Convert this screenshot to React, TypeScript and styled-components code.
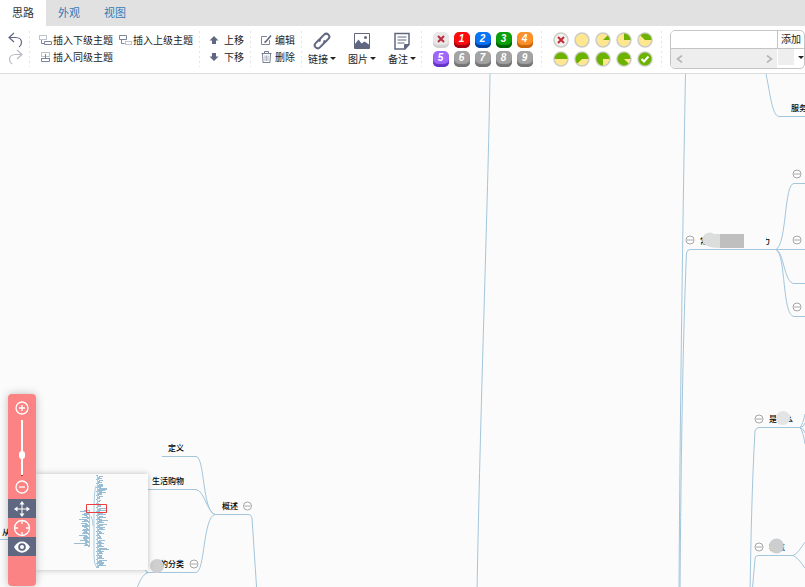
import React from 'react';
import styled, { createGlobalStyle, css } from 'styled-components';

const LINE = '#a3c6dc';
const ICON = '#5f6880';

const GlobalStyle = createGlobalStyle`
  * { box-sizing: border-box; }
  body {
    margin: 0;
    background: #fbfbfb;
    color: #222;
    font-family: "Noto Sans CJK SC", "Liberation Sans", sans-serif;
    font-size: 10px;
  }
  button {
    margin: 0;
    padding: 0;
    border: 0;
    background: none;
    color: inherit;
    font: inherit;
    cursor: pointer;
  }
  svg { display: block; flex: none; }
`;

const divider = css`
  background: repeating-linear-gradient(to bottom, #e4e4e4 0 2px, transparent 2px 5px)
    right 6px / 1px 36px no-repeat;
`;

const Page = styled.div`
  display: flex;
  flex-direction: column;
  height: 100vh;
  overflow: hidden;
`;

const Tabs = styled.nav`
  display: flex;
  flex: none;
  height: 26px;
  background: #e1e1e1;
`;

const Tab = styled.button<{ $active?: boolean }>`
  width: 46px;
  font-size: 11px;
  line-height: 24px;
  padding-bottom: 2px;
  color: ${(p) => (p.$active ? '#333' : '#337ab7')};
  background: ${(p) => (p.$active ? '#fff' : 'transparent')};
`;

const Toolbar = styled.div`
  display: flex;
  flex: none;
  height: 48px;
  background: #fff;
  border-bottom: 1px solid #dbdbdb;
`;

const Group = styled.div<{ $pad?: number; $end?: number }>`
  display: flex;
  flex: none;
  flex-direction: column;
  padding: 6px ${(p) => p.$end ?? 7}px 0 ${(p) => p.$pad ?? 9}px;
  ${divider}
  background-position: right 0 top 5px;
`;

const Row = styled.div`
  display: flex;
  gap: 6px;
  height: 17px;
`;

const ToolButton = styled.button<{ $gap?: number; $off?: boolean }>`
  display: flex;
  align-items: center;
  gap: ${(p) => p.$gap ?? 0}px;
  height: 17px;
  line-height: 16px;
  padding-bottom: 1px;
  white-space: nowrap;
  opacity: ${(p) => (p.$off ? 0.45 : 1)};
`;

const BigGroup = styled.div`
  display: flex;
  flex: none;
  ${divider}
  background-position: right 0 top 5px;
`;

const BigButton = styled.button`
  display: flex;
  flex-direction: column;
  align-items: center;
  width: 40px;
  padding-top: 6px;
`;

const BigLabel = styled.span`
  display: flex;
  align-items: center;
  gap: 2px;
  height: 17px;
  line-height: 17px;
`;

const Caret = styled.i`
  border: 3px solid transparent;
  border-top-color: #222;
  border-bottom: 0;
`;

const BadgeGrid = styled.div`
  display: grid;
  flex: none;
  grid-template-columns: repeat(5, 16px);
  grid-auto-rows: 16px;
  gap: 3px 5px;
  padding: 6px 9px 0 11px;
  ${divider}
  background-position: right 0 top 5px;
`;

const Badge = styled.button<{ $top: string; $edge: string }>`
  display: flex;
  align-items: center;
  justify-content: center;
  width: 16px;
  height: 16px;
  padding: 0 1px 2px 0;
  border-radius: 5px;
  background: ${(p) => p.$top};
  box-shadow: inset 0 -3px 1px ${(p) => p.$edge};
  color: #fff;
  font: italic bold 10px/14px "Liberation Sans", sans-serif;
`;

const PlainButton = styled.button`
  display: flex;
  align-items: center;
  justify-content: center;
`;

const Resource = styled.div`
  display: grid;
  flex: 1;
  grid-template-columns: 1fr 26px;
  grid-template-rows: 18px 18px;
  height: 39px;
  margin: 4px 0 0 8px;
  border: 1px solid #c4c4c4;
  border-radius: 5px;
  overflow: hidden;
`;

const ResourceInput = styled.input`
  min-width: 0;
  width: 100%;
  border: 0;
  border-right: 1px solid #c4c4c4;
  border-bottom: 1px solid #c4c4c4;
  padding: 0 4px;
  font: inherit;
  outline: 0;
`;

const AddButton = styled.button`
  padding-bottom: 1px;
  border-bottom: 1px solid #c4c4c4;
  line-height: 14px;
  white-space: nowrap;
`;

const ResourceList = styled.div`
  display: flex;
  align-items: center;
  justify-content: space-between;
  height: 19px;
  padding: 0 4px 0 5px;
  border-right: 1px solid #fff;
  background: #eee;
`;

const ResourceMore = styled.button`
  display: flex;
  align-items: center;
  justify-content: flex-end;
  height: 16px;
  background: linear-gradient(to right, #eee 16px, #fff 16px);
`;

const Canvas = styled.main`
  position: relative;
  flex: 1;
  min-height: 0;
  overflow: hidden;
  background: #fbfbfb;
`;

const Drawing = styled.svg`
  position: absolute;
  inset: 0;
  width: 100%;
  height: 100%;
`;

const NodeLabel = styled.span<{ $x: number; $y: number }>`
  position: absolute;
  left: ${(p) => p.$x}px;
  top: ${(p) => p.$y}px;
  color: #000;
  font-size: 8px;
  font-weight: 500;
  line-height: 12px;
  white-space: nowrap;
`;

const Navigator = styled.aside`
  position: absolute;
  left: 8px;
  bottom: 1px;
  display: flex;
  flex-direction: column;
  align-items: center;
  width: 28px;
  height: 192px;
  padding-top: 4px;
  border-radius: 4px;
  background: #fc8383;
  box-shadow: 0 0 8px rgba(0, 0, 0, 0.25);
`;

const NavButton = styled.button<{ $dark?: boolean }>`
  display: flex;
  flex: none;
  align-items: center;
  justify-content: center;
  width: 28px;
  height: 19px;
  background: ${(p) => (p.$dark ? '#5f6880' : 'transparent')};
`;

const ZoomSlider = styled.input`
  appearance: none;
  flex: none;
  writing-mode: vertical-lr;
  direction: rtl;
  width: 8px;
  height: 56px;
  margin: 3px 0 1px;
  background: transparent;
  &::-webkit-slider-runnable-track {
    width: 2px;
    height: 56px;
    background: linear-gradient(to top, #e02020 1px, #fff 1px);
  }
  &::-webkit-slider-thumb {
    appearance: none;
    width: 6px;
    height: 8px;
    margin-right: -2px;
    margin-left: -2px;
    border-radius: 3px;
    background: #fff;
  }
`;

const NavTools = styled.div`
  display: flex;
  flex-direction: column;
  margin-top: 3px;
`;

const MiniMap = styled.div`
  position: absolute;
  left: 36px;
  bottom: 17px;
  width: 112px;
  height: 96px;
  background: #fbfbfb;
  box-shadow: 0 0 6px rgba(0, 0, 0, 0.25);
`;

const InsertIcon = ({ kind }: { kind: 'child' | 'parent' | 'sibling' }) => (
  <svg width="14" height="12" viewBox="0 0 14 12" fill="none" stroke="#7d8498">
    {kind === 'child' && (
      <>
        <path d="M.5 1.500h7v4h-7z" strokeDasharray="1 1" />
        <path d="M2.500 6v3.500h3M5.500 7.500h7v3h-7z" />
      </>
    )}
    {kind === 'parent' && (
      <>
        <path d="M.5 1.500h7v4h-7zM2.500 5.500v4h3" />
        <path d="M6.500 7.500h6v3h-6z" strokeDasharray="1 1" />
      </>
    )}
    {kind === 'sibling' && (
      <>
        <path d="M2.500 1.500h8v4h-8z" strokeDasharray="1 1" />
        <path d="M6.500 3v4.500M2 7.500h9M2.500 7.500v3h8v-3" />
      </>
    )}
  </svg>
);

const HistoryIcon = ({ flip }: { flip?: boolean }) => (
  <svg width="15" height="16" viewBox="0 0 15 16" fill="none" stroke={ICON} strokeWidth="1.200">
    <path
      transform={flip ? 'translate(15 0) scale(-1 1)' : undefined}
      d="M6 1L1 5.500l5 4.500M1 5.500h6.500c4 0 6 2.500 6 5 0 2-1 3.500-2.500 4.500"
    />
  </svg>
);

const ArrowIcon = ({ down }: { down?: boolean }) => (
  <svg width="10" height="10" viewBox="0 0 10 10" fill={ICON}>
    <path transform={down ? 'rotate(180 5 5)' : undefined} d="M5 1l4.500 4.500H7V9H3V5.500H.5z" />
  </svg>
);

const EditIcon = () => (
  <svg width="11" height="12" viewBox="0 0 11 12" fill="none" stroke={ICON}>
    <path d="M6 2.500H.5v8h8V6" opacity=".8" />
    <path d="M10 1.500L5 7.500l-1.500 1" strokeWidth="1.600" />
  </svg>
);

const TrashIcon = () => (
  <svg width="11" height="12" viewBox="0 0 11 12" fill="none" stroke={ICON}>
    <path d="M.5 2.500h10M3.500 2V.5h4V2M1.500 2.500l.5 9h7l.5-9" opacity=".85" />
    <path d="M4 4.500V10M5.500 4.500V10M7 4.500V10" opacity=".5" />
  </svg>
);

const LinkIcon = () => (
  <svg width="18" height="18" viewBox="0 0 18 18" fill="none" stroke={ICON} strokeWidth="2">
    <g transform="rotate(-45 9 9)">
      <path d="M8.500 6H3a3 3 0 0 0 0 6H8a3 3 0 0 0 2.800-2" />
      <path d="M9.500 12H15a3 3 0 0 0 0-6H10a3 3 0 0 0-2.800 2" />
    </g>
  </svg>
);

const ImageIcon = () => (
  <svg width="18" height="18" viewBox="0 0 18 18">
    <path d="M1.500 1.500h15v15h-15z" fill="#fff" stroke={ICON} />
    <path d="M2 12l3.500-4.500 3 4 3-2 4.500 3V17H2z" fill={ICON} />
    <circle cx="12.500" cy="5.500" r="1.500" fill={ICON} />
  </svg>
);

const NoteIcon = () => (
  <svg width="18" height="18" viewBox="0 0 18 18" fill="none" stroke={ICON}>
    <path d="M2 1.500h14v11L12 17H2z" strokeWidth="1.500" />
    <path d="M4.500 5h9M4.500 8h9M4.500 11h7" />
    <path d="M11.500 17v-4.500H16z" fill={ICON} />
  </svg>
);

const Cross = () => (
  <svg width="8" height="8" viewBox="0 0 8 8" stroke="#bb2d3d" strokeWidth="2">
    <path d="M1 1l6 6M7 1L1 7" />
  </svg>
);

const ProgressIcon = ({ step }: { step: number }) => {
  const start = -(step / 8) * 2 * Math.PI;
  const x = 8 + 6.5 * Math.cos(start);
  const y = 8 + 6.5 * Math.sin(start);
  return (
    <svg width="16" height="16" viewBox="0 0 16 16">
      <circle cx="8" cy="8" r="7" fill={step < 0 ? '#f2f2f2' : '#ffe78f'} stroke="#cbcbc6" strokeWidth="1.500" />
      {step > 0 && step < 8 && (
        <path d={`M8 8L${x} ${y}A6.500 6.500 0 ${step > 4 ? 1 : 0} 1 14.500 8z`} fill="#6bb300" />
      )}
      {step === 8 && (
        <>
          <circle cx="8" cy="8" r="6.500" fill="#6bb300" />
          <path d="M4.500 8l2.500 2.500 4.500-5" fill="none" stroke="#fff" strokeWidth="2" />
        </>
      )}
      {step < 0 && <path d="M5 5l6 6M11 5l-6 6" stroke="#c62a35" strokeWidth="2" />}
    </svg>
  );
};

const Chevron = ({ right }: { right?: boolean }) => (
  <svg width="7" height="8" viewBox="0 0 7 8" fill="none" stroke="#b5b5b5" strokeWidth="1.600">
    <path d={right ? 'M1 .5L5.500 4 1 7.500' : 'M6 .5L1.500 4 6 7.500'} />
  </svg>
);

const ZoomIcon = ({ plus }: { plus?: boolean }) => (
  <svg width="14" height="14" viewBox="0 0 14 14" fill="none" stroke="#fff">
    <circle cx="7" cy="7" r="6" strokeWidth="1.300" />
    <path d={plus ? 'M4 7h6M7 4v6' : 'M4 7h6'} strokeWidth="1.300" />
  </svg>
);

const MoveIcon = () => (
  <svg width="16" height="16" viewBox="0 0 16 16" fill="#fff">
    <path d="M7.500 3h1v4.500H13v1H8.500V13h-1V8.500H3v-1h4.500zM8 0l2.500 3.500h-5zM8 16l-2.500-3.500h5zM0 8l3.500-2.500v5zM16 8l-3.500 2.500v-5z" />
  </svg>
);

const FocusIcon = () => (
  <svg width="18" height="18" viewBox="0 0 18 18" fill="none" stroke="#fff">
    <circle cx="9" cy="9" r="7.500" strokeWidth="1.300" />
    <path d="M9 1v4M9 13v4M1 9h4M13 9h4" strokeWidth="1.300" />
  </svg>
);

const EyeIcon = () => (
  <svg width="16" height="12" viewBox="0 0 16 12">
    <path d="M0 6c4-7.500 12-7.500 16 0-4 7.500-12 7.500-16 0z" fill="#fff" />
    <circle cx="8" cy="6" r="3.800" fill="#5f6880" />
    <circle cx="8" cy="6" r="2" fill="#fff" />
  </svg>
);

const priorities = [
  { n: 1, top: '#fb0d0d', edge: '#a30016' },
  { n: 2, top: '#0a74f5', edge: '#003f9c' },
  { n: 3, top: '#0ba00b', edge: '#006300' },
  { n: 4, top: '#fb912b', edge: '#c9640c' },
  { n: 5, top: '#a066fb', edge: '#6233c4' },
  { n: 6, top: '#a3a3a3', edge: '#747474' },
  { n: 7, top: '#a3a3a3', edge: '#747474' },
  { n: 8, top: '#a3a3a3', edge: '#747474' },
  { n: 9, top: '#a3a3a3', edge: '#747474' },
];

const branches = [
  'M490 0C488 130 480 340 477 520',
  'M685.500 0C683 130 680 340 679 520',
  'M776 175.500H690Q687 175.500 686.500 179C683 260 681 380 680 520',
  'M766 0C770 18 772 42 779 42.500H805',
  'M776 175.500C787 170 784 109 794 109.500H805',
  'M776 175.500H805',
  'M776 175.500C784 178 784 209 794 209.500H805',
  'M776 175.500C786 180 782 242 794 242.500H805',
  'M800 353.500H759Q756 353.500 755 357C752 410 751 460 750 520',
  'M800 353.500Q803 350 805 340M800 353.500Q804 353 805 349M800 353.500Q804 355 805 359M800 353.500Q803 357 805 370',
  'M793 481.500H758Q755 481.500 755 485L752 520',
  'M793 481.500C799 479 802 471 807 466M793 481.500C799 484 802 491 807 496',
  'M162 382.500H196C205 383 202 437 215 440.500',
  'M148 415.500H196C204 416 207 438 215 440.500',
  'M215 440.500H249Q251 440.500 252 444L257 520',
  'M215 440.500C203 443 205 498 196 498.500H146',
  'M148 498.500C142 501 140 507 137 514M148 498.500L140 492',
  'M0 465.500H10',
];

const toggles = [
  [690, 166], [797, 100], [797, 166], [797, 233], [759, 345], [759, 473], [247.5, 432], [194, 490],
];

const rightTwigs = [
  2, 4, 2, 5, 3, 4, 2, 5, 3, 4, 5, 6, 5, 8, 9, 8, 6, 7, 4, 5, 3, 4, 2, 3, 1, 2, 2, 1, 3, 2, 3, 4,
  2, 7, 3, 9, 4, 8, 5, 9, 3, 4, 8, 3, 6, 9, 4, 7, 3, 8, 5, 3, 9, 4, 7, 2, 5, 3, 6, 2, 4, 2, 3, 5,
  2, 6, 3, 5, 8, 2, 4, 7, 3, 8, 11, 4, 8, 3, 5, 2, 6, 3, 4, 7, 2, 8, 4, 7, 8, 4, 8, 2, 3,
];
const leftTwigs = [
  6, 7, 2, 5, 8, 3, 2, 7, 3, 8, 4, 7, 2, 6, 3, 7, 8, 3, 2, 6, 8, 3, 5, 7, 2, 8, 4, 6, 7, 3, 8, 4, 5, 13, 3, 5, 2,
];

const MiniTree = () => (
  <svg width="112" height="96" viewBox="0 0 112 96" fill="none">
    <path
      stroke="#8db5cf"
      strokeWidth=".9"
      d={
        rightTwigs.map((n, i) => `M${60 + ((i * 3) % 4)} ${1.5 + i}h${n}`).join('') +
        leftTwigs.map((n, i) => `M${54 - ((i * 3) % 4)} ${36.5 + i}h${-n}`).join('')
      }
    />
    <path stroke="#aecbdc" d="M61.500 2v91M60 12Q58 16 58 40V82Q58 90 61 94M53.500 37v36M55 42Q57 46 57 52" />
    <path stroke="#ee3b41" d="M50.500 30.500h20v8h-20z" />
  </svg>
);

export default function App() {
  return (
    <Page>
      <GlobalStyle />
      <Tabs>
        <Tab $active>思路</Tab>
        <Tab>外观</Tab>
        <Tab>视图</Tab>
      </Tabs>
      <Toolbar>
        <Group $pad={8}>
          <Row><ToolButton aria-label="撤销"><HistoryIcon /></ToolButton></Row>
          <Row><ToolButton aria-label="重做" $off><HistoryIcon flip /></ToolButton></Row>
        </Group>
        <Group>
          <Row>
            <ToolButton><InsertIcon kind="child" />插入下级主题</ToolButton>
            <ToolButton><InsertIcon kind="parent" />插入上级主题</ToolButton>
          </Row>
          <Row>
            <ToolButton><InsertIcon kind="sibling" />插入同级主题</ToolButton>
          </Row>
        </Group>
        <Group>
          <Row><ToolButton $gap={5}><ArrowIcon />上移</ToolButton></Row>
          <Row><ToolButton $gap={5}><ArrowIcon down />下移</ToolButton></Row>
        </Group>
        <Group $pad={10}>
          <Row><ToolButton $gap={3}><EditIcon />编辑</ToolButton></Row>
          <Row><ToolButton $gap={3}><TrashIcon />删除</ToolButton></Row>
        </Group>
        <BigGroup>
          <BigButton><LinkIcon /><BigLabel>链接<Caret /></BigLabel></BigButton>
          <BigButton><ImageIcon /><BigLabel>图片<Caret /></BigLabel></BigButton>
          <BigButton><NoteIcon /><BigLabel>备注<Caret /></BigLabel></BigButton>
        </BigGroup>
        <BadgeGrid>
          <Badge $top="#e9e9e9" $edge="#d2d2d2" aria-label="移除优先级"><Cross /></Badge>
          {priorities.map((p) => (
            <Badge key={p.n} $top={p.top} $edge={p.edge}>{p.n}</Badge>
          ))}
        </BadgeGrid>
        <BadgeGrid>
          {[-1, 0, 1, 2, 3, 4, 5, 6, 7, 8].map((step) => (
            <PlainButton key={step} aria-label={step < 0 ? '移除进度' : `进度 ${step}/8`}>
              <ProgressIcon step={step} />
            </PlainButton>
          ))}
        </BadgeGrid>
        <Resource>
          <ResourceInput aria-label="资源" />
          <AddButton>添加</AddButton>
          <ResourceList>
            <PlainButton aria-label="向左"><Chevron /></PlainButton>
            <PlainButton aria-label="向右"><Chevron right /></PlainButton>
          </ResourceList>
          <ResourceMore aria-label="更多"><Caret /></ResourceMore>
        </Resource>
      </Toolbar>
      <Canvas>
        <Drawing fill="none">
          <path d={branches.join('')} stroke={LINE} />
          {toggles.map(([x, y]) => (
            <g key={`${x}-${y}`} stroke="#a6a6a6">
              <circle cx={x} cy={y} r="4" fill="#fff" />
              <path d={`M${x - 3} ${y}h6`} />
            </g>
          ))}
        </Drawing>
        <NodeLabel $x={791} $y={28}>服务</NodeLabel>
        <NodeLabel $x={700} $y={161}>常</NodeLabel>
        <NodeLabel $x={762} $y={161}>力</NodeLabel>
        <NodeLabel $x={769} $y={339}>是什么</NodeLabel>
        <NodeLabel $x={769} $y={467}>特点</NodeLabel>
        <NodeLabel $x={168} $y={368}>定义</NodeLabel>
        <NodeLabel $x={152} $y={401}>生活购物</NodeLabel>
        <NodeLabel $x={222} $y={426}>概述</NodeLabel>
        <NodeLabel $x={160} $y={484}>的分类</NodeLabel>
        <NodeLabel $x={2} $y={452}>从</NodeLabel>
        <Drawing>
          <path d="M744 160h22v13h-22z" fill="#fbfbfb" />
          <path d="M720 160v14q-12 0-16-4-4-5 1-10 5-3 9 0z" fill="#dcdddd" />
          <path d="M720 160h24v14h-24z" fill="#bfbfbf" />
          <circle cx="783" cy="344" r="7" fill="#e3e4e4" />
          <circle cx="776.500" cy="472" r="7.500" fill="#cdcecf" />
          <circle cx="157" cy="492" r="7" fill="#cfcfcf" />
        </Drawing>
        <MiniMap><MiniTree /></MiniMap>
        <Navigator>
          <NavButton aria-label="放大"><ZoomIcon plus /></NavButton>
          <ZoomSlider type="range" aria-label="缩放" defaultValue={36} />
          <NavButton aria-label="缩小"><ZoomIcon /></NavButton>
          <NavTools>
            <NavButton $dark aria-label="拖动画布"><MoveIcon /></NavButton>
            <NavButton aria-label="定位中心"><FocusIcon /></NavButton>
            <NavButton $dark aria-label="显示导航"><EyeIcon /></NavButton>
          </NavTools>
        </Navigator>
      </Canvas>
    </Page>
  );
}
